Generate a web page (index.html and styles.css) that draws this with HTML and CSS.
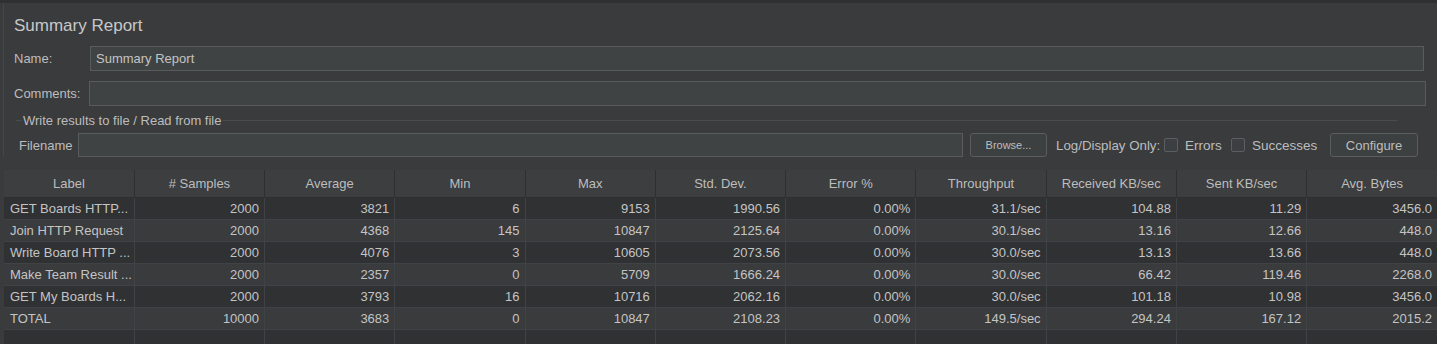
FILE: index.html
```html
<!DOCTYPE html>
<html lang="en">
<head>
  <meta charset="UTF-8" />
  <meta name="viewport" content="width=device-width, initial-scale=1.0"/>
  <title>Summary Report</title>
  <link rel="stylesheet" href="styles.css">
</head>
<body>
  <div class="panel">
    <h1 class="title">Summary Report</h1>
    <div class="field-row">
      <label class="field-label">Name:</label>
      <input class="text-input" type="text" value="Summary Report">
    </div>
    <div class="field-row comments">
      <label class="field-label">Comments:</label>
      <input class="text-input" type="text" value="">
    </div>

    <div class="file-box">
      <div class="legend"><span>Write results to file / Read from file</span></div>
      <div class="file-row">
        <label class="file-label">Filename</label>
        <input class="text-input file-input" type="text" value="">
        <button class="btn browse">Browse...</button>
        <span class="log-label">Log/Display Only:</span>
        <span class="check errors"><span class="box"></span>Errors</span>
        <span class="check successes"><span class="box"></span>Successes</span>
        <button class="btn configure">Configure</button>
      </div>
    </div>
  </div>

  <div class="table-wrap">
    <table class="report">
      <thead>
        <tr>
          <th>Label</th>
          <th># Samples</th>
          <th>Average</th>
          <th>Min</th>
          <th>Max</th>
          <th>Std. Dev.</th>
          <th>Error %</th>
          <th>Throughput</th>
          <th>Received KB/sec</th>
          <th>Sent KB/sec</th>
          <th>Avg. Bytes</th>
        </tr>
      </thead>
      <tbody>
        <tr><td>GET Boards HTTP...</td><td>2000</td><td>3821</td><td>6</td><td>9153</td><td>1990.56</td><td>0.00%</td><td>31.1/sec</td><td>104.88</td><td>11.29</td><td>3456.0</td></tr>
        <tr><td>Join HTTP Request</td><td>2000</td><td>4368</td><td>145</td><td>10847</td><td>2125.64</td><td>0.00%</td><td>30.1/sec</td><td>13.16</td><td>12.66</td><td>448.0</td></tr>
        <tr><td>Write Board HTTP ...</td><td>2000</td><td>4076</td><td>3</td><td>10605</td><td>2073.56</td><td>0.00%</td><td>30.0/sec</td><td>13.13</td><td>13.66</td><td>448.0</td></tr>
        <tr><td>Make Team Result ...</td><td>2000</td><td>2357</td><td>0</td><td>5709</td><td>1666.24</td><td>0.00%</td><td>30.0/sec</td><td>66.42</td><td>119.46</td><td>2268.0</td></tr>
        <tr><td>GET My Boards H...</td><td>2000</td><td>3793</td><td>16</td><td>10716</td><td>2062.16</td><td>0.00%</td><td>30.0/sec</td><td>101.18</td><td>10.98</td><td>3456.0</td></tr>
        <tr><td>TOTAL</td><td>10000</td><td>3683</td><td>0</td><td>10847</td><td>2108.23</td><td>0.00%</td><td>149.5/sec</td><td>294.24</td><td>167.12</td><td>2015.2</td></tr>
        <tr class="empty"><td></td><td></td><td></td><td></td><td></td><td></td><td></td><td></td><td></td><td></td><td></td></tr>
      </tbody>
    </table>
  </div>
</body>
</html>
```

FILE: styles.css
```css
* {margin: 0; padding: 0; box-sizing: border-box; font-family: 'Liberation Sans', Arial, sans-serif;}
body {
  background: #3a3b3d;
  color: #c4c4c4;
  border-top: 3px solid #2f3032;
  height: 344px;
  overflow: hidden;
}
.panel {
  padding: 13px 13px 0 10px;
  border-left: 1px solid #444648;
  margin-left: 3px;
}
.title {
  font-size: 17px;
  font-weight: normal;
  line-height: 20px;
  color: #c8c8c8;
}
.field-row {
  display: flex;
  align-items: center;
  margin-top: 10px;
  height: 25px;
}
.field-label {
  width: 76px;
  font-size: 13px;
  color: #bdbdbd;
}
.comments .field-label {
  width: 75px;
}
.text-input {
  flex: 1;
  height: 25px;
  background: #3f4343;
  border: 1px solid #585c5c;
  color: #c4c4c4;
  font-size: 13px;
  padding: 0 5px;
  outline: none;
}
.comments .text-input {
  margin-right: -2px;
}
.file-box {
  margin-top: 6px;
}
.legend {
  display: flex;
  align-items: center;
  height: 16px;
  font-size: 13px;
  color: #bdbdbd;
  margin-right: 27px;
}
.legend::before {
  content: "";
  width: 5px;
  margin: 0 2px 0 2px;
  border-top: 1px solid #4a4c4e;
}
.legend::after {
  content: "";
  flex: 1;
  margin-left: 2px;
  border-top: 1px solid #4a4c4e;
}
.file-row {
  display: flex;
  align-items: center;
  margin-top: 5px;
  height: 24px;
  padding-left: 5px;
  padding-right: 6px;
  font-size: 13px;
  color: #bdbdbd;
}
.file-label {
  width: 59px;
}
.file-input {
  height: 24px;
}
.btn {
  height: 24px;
  background: #3c4040;
  border: 1px solid #5a5e5e;
  border-radius: 3px;
  color: #bdbdbd;
}
.browse {
  width: 77px;
  margin-left: 7px;
  font-size: 11px;
}
.log-label {
  width: 108px;
  margin-left: 9px;
  font-size: 13.3px;
}
.check {
  display: flex;
  align-items: center;
  font-size: 13.5px;
}
.check.errors {
  width: 67px;
}
.check.successes {
  width: 99px;
}
.check .box {
  width: 14px;
  height: 14px;
  margin-right: 7px;
  border: 1px solid #5b5f61;
  border-radius: 2px;
  background: #3c3f41;
}
.configure {
  width: 88px;
  font-size: 13px;
}
.table-wrap {
  margin-top: 13px;
  padding-left: 4px;
}
.report {
  width: 100%;
  table-layout: fixed;
  border-collapse: collapse;
  font-size: 13px;
}
.report th {
  height: 27px;
  background: #3c3e40;
  font-weight: normal;
  color: #bdbdbd;
  border-right: 1px solid #2d2f31;
  border-bottom: 1px solid #2d2f31;
}
.report td {
  height: 22px;
  padding: 0 5px;
  text-align: right;
  color: #c4c4c4;
  white-space: nowrap;
  overflow: hidden;
  border-right: 1px solid #404345;
  border-bottom: 1px solid #404345;
}
.report td:first-child {
  text-align: left;
  padding-left: 6px;
}
.report th:last-child, .report td:last-child {
  border-right: none;
}
.report tbody tr:nth-child(odd) td {
  background: #2f3133;
}
.report tbody tr:nth-child(even) td {
  background: #393b3d;
}
```
